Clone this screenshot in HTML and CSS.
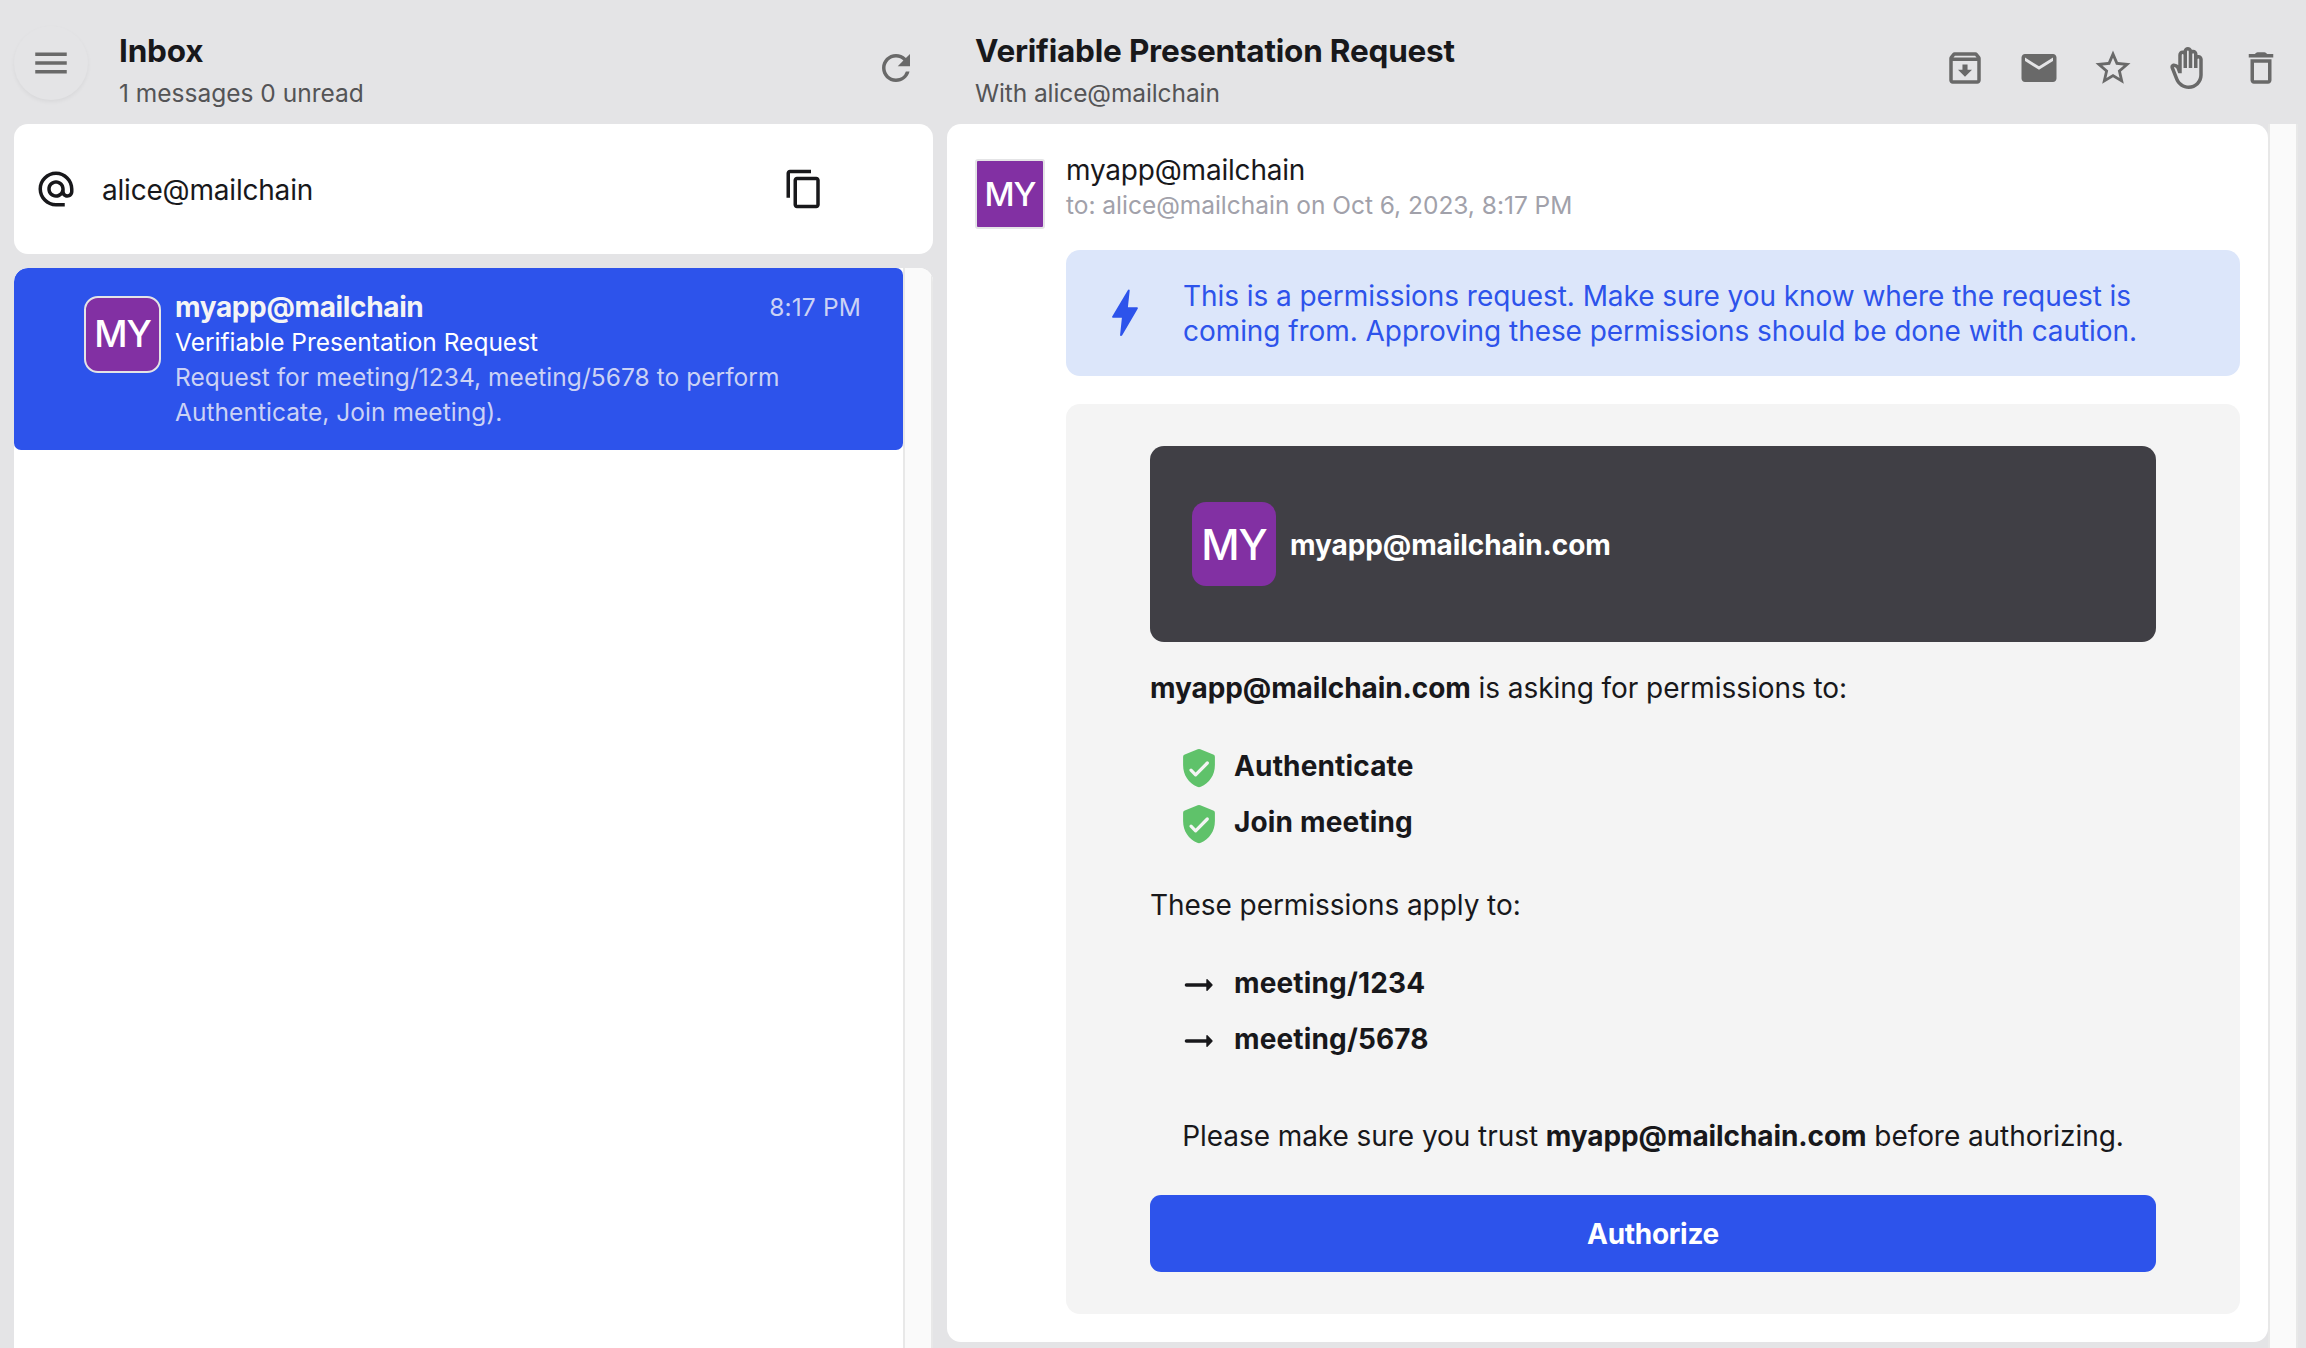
FILE: index.html
```html
<!DOCTYPE html>
<html lang="en">
<head>
<meta charset="utf-8">
<title>Inbox</title>
<link rel="stylesheet" href="styles.css">
</head>
<body>
<div class="app">
  <section class="inbox">
    <header class="bar">
      <button class="menu" aria-label="Menu"><svg class="icon" viewBox="0 0 24 24"><path d="M3 18h18v-2H3v2zm0-5h18v-2H3v2zm0-7v2h18V6H3z"/></svg></button>
      <div class="heading">
        <h1>Inbox</h1>
        <p>1 messages 0 unread</p>
      </div>
      <svg class="icon refresh" viewBox="0 0 24 24"><path d="M17.65 6.35A7.958 7.958 0 0 0 12 4c-4.42 0-7.99 3.58-7.99 8s3.57 8 7.99 8c3.73 0 6.84-2.55 7.73-6h-2.08A5.99 5.99 0 0 1 12 18c-3.31 0-6-2.69-6-6s2.69-6 6-6c1.66 0 3.14.69 4.22 1.78L13 11h7V4l-2.35 2.35z"/></svg>
    </header>
    <div class="address">
      <svg class="icon dark" viewBox="0 0 24 24"><path d="M12 2C6.48 2 2 6.48 2 12s4.48 10 10 10h5v-2h-5c-4.34 0-8-3.66-8-8s3.66-8 8-8 8 3.66 8 8v1.43c0 .79-.71 1.57-1.5 1.57s-1.5-.78-1.5-1.57V12c0-2.76-2.24-5-5-5s-5 2.24-5 5 2.24 5 5 5c1.38 0 2.64-.56 3.54-1.47.65.89 1.77 1.47 2.96 1.47 1.97 0 3.5-1.6 3.5-3.57V12c0-5.52-4.48-10-10-10zm0 13c-1.66 0-3-1.34-3-3s1.34-3 3-3 3 1.34 3 3-1.34 3-3 3z"/></svg>
      <span class="address-name">alice@mailchain</span>
      <svg class="icon dark" viewBox="0 0 24 24"><path d="M16 1H4c-1.1 0-2 .9-2 2v14h2V3h12V1zm3 4H8c-1.1 0-2 .9-2 2v14c0 1.1.9 2 2 2h11c1.1 0 2-.9 2-2V7c0-1.1-.9-2-2-2zm0 16H8V7h11v14z"/></svg>
    </div>
    <div class="list">
      <div class="list-body">
        <article class="item">
          <div class="avatar avatar-list">MY</div>
          <div class="item-text">
            <div class="item-top"><strong>myapp@mailchain</strong><time>8:17 PM</time></div>
            <p class="subject">Verifiable Presentation Request</p>
            <p class="preview">Request for meeting/1234, meeting/5678 to perform Authenticate, Join meeting).</p>
          </div>
        </article>
      </div>
      <div class="track"></div>
    </div>
  </section>

  <section class="reader">
    <header class="bar">
      <div class="heading">
        <h1>Verifiable Presentation Request</h1>
        <p>With alice@mailchain</p>
      </div>
      <nav class="actions">
        <svg class="icon" viewBox="0 0 24 24"><path d="M20.54 5.23l-1.39-1.68C18.88 3.21 18.47 3 18 3H6c-.47 0-.88.21-1.16.55L3.46 5.23C3.17 5.57 3 6.02 3 6.5V19c0 1.1.9 2 2 2h14c1.1 0 2-.9 2-2V6.5c0-.48-.17-.93-.46-1.27zM6.24 5h11.52l.83 1H5.42l.82-1zM5 19V8h14v11H5zm8.45-9h-2.9v3H8l4 4 4-4h-2.55z"/></svg>
        <svg class="icon" viewBox="0 0 24 24"><path d="M20 4H4c-1.1 0-1.99.9-1.99 2L2 18c0 1.1.9 2 2 2h16c1.1 0 2-.9 2-2V6c0-1.1-.9-2-2-2zm0 4l-8 5-8-5V6l8 5 8-5v2z"/></svg>
        <svg class="icon" viewBox="0 0 24 24"><path d="M22 9.24l-7.19-.62L12 2 9.19 8.63 2 9.24l5.46 4.73L5.82 21 12 17.27 18.18 21l-1.63-7.03L22 9.24zM12 15.4l-3.76 2.27 1-4.28-3.32-2.88 4.38-.38L12 6.1l1.71 4.04 4.38.38-3.32 2.88 1 4.28L12 15.4z"/></svg>
        <svg class="icon" viewBox="0 0 24 24"><path d="M21 7c0-1.38-1.12-2.5-2.5-2.5-.17 0-.34.02-.5.05V4c0-1.38-1.12-2.5-2.5-2.5-.23 0-.46.03-.67.09C14.46.66 13.56 0 12.5 0c-1.23 0-2.25.89-2.46 2.06C9.87 2.02 9.69 2 9.5 2 8.12 2 7 3.12 7 4.5v5.89c-.34-.31-.76-.54-1.22-.66l-.77-.21c-.83-.23-1.7.09-2.19.83-.38.57-.4 1.31-.15 1.95l2.56 6.43C6.49 21.91 9.57 24 13 24c4.42 0 8-3.58 8-8V7zm-2 9c0 3.31-2.69 6-6 6-2.61 0-4.95-1.59-5.91-4.01l-2.6-6.54.53.14c.46.12.83.46 1 .9L7 15h2V4.5c0-.28.22-.5.5-.5s.5.22.5.5V12h2V2.5c0-.28.22-.5.5-.5s.5.22.5.5V12h2V4c0-.28.22-.5.5-.5s.5.22.5.5v8h2V7c0-.28.22-.5.5-.5s.5.22.5.5v9z"/></svg>
        <svg class="icon" viewBox="0 0 24 24"><path d="M6 19c0 1.1.9 2 2 2h8c1.1 0 2-.9 2-2V7H6v12zM8 9h8v10H8V9zm7.5-5l-.6-.6c-.3-.3-.6-.4-1-.4h-3.800c-.4 0-.7.1-1 .4L8.500 4H5v2h14V4h-3.5z"/></svg>
      </nav>
    </header>
    <div class="reader-body">
      <article class="message">
        <div class="avatar avatar-message">MY</div>
        <div class="message-main">
          <p class="from">myapp@mailchain</p>
          <p class="to">to: alice@mailchain on Oct 6, 2023, 8:17 PM</p>
          <div class="notice">
            <svg class="bolt" viewBox="0 0 26 48"><path d="M15.8 1.2c.6-1.2 2-.9 1.9.4L15.9 18.300h8.900c.9 0 1.300.7.9 1.500L10.200 46.300c-.7 1.200-2.200.9-2.100-.4l1.800-17.100H1c-.8 0-1.200-.7-.8-1.400z"/></svg>
            <p>This is a permissions request. Make sure you know where the request is coming from. Approving these permissions should be done with caution.</p>
          </div>
          <div class="request">
            <div class="requester">
              <div class="avatar avatar-request">MY</div>
              <strong>myapp@mailchain.com</strong>
            </div>
            <p class="asking"><strong>myapp@mailchain.com</strong> is asking for permissions to:</p>
            <ul class="rows">
              <li><svg viewBox="0 0 42 42"><path class="shield" d="M19.700 2.300a3.500 3.500 0 0 1 2.600 0l12.900 5.200a2.400 2.400 0 0 1 1.700 2.300V18c0 10.200-5.600 18.100-14.100 21.700a4.200 4.200 0 0 1-3.600 0C10.700 36.100 5.100 28.200 5.100 18V9.800a2.400 2.400 0 0 1 1.700-2.300z"/><path class="tick" d="M13 23.100l4.600 4.700L29.300 16"/></svg><strong>Authenticate</strong></li>
              <li><svg viewBox="0 0 42 42"><path class="shield" d="M19.700 2.300a3.500 3.500 0 0 1 2.600 0l12.900 5.200a2.400 2.400 0 0 1 1.700 2.300V18c0 10.200-5.600 18.100-14.100 21.700a4.200 4.200 0 0 1-3.600 0C10.700 36.100 5.100 28.200 5.100 18V9.800a2.400 2.400 0 0 1 1.700-2.300z"/><path class="tick" d="M13 23.100l4.600 4.700L29.300 16"/></svg><strong>Join meeting</strong></li>
            </ul>
            <p class="apply">These permissions apply to:</p>
            <ul class="rows">
              <li><svg viewBox="0 0 42 42"><path class="shaft" d="M8.500 21H29"/><path class="head" d="M29 15.800l5 5.200-5 5.200z"/></svg><strong>meeting/1234</strong></li>
              <li><svg viewBox="0 0 42 42"><path class="shaft" d="M8.500 21H29"/><path class="head" d="M29 15.800l5 5.200-5 5.200z"/></svg><strong>meeting/5678</strong></li>
            </ul>
            <p class="trust">Please make sure you trust <strong>myapp@mailchain.com</strong> before authorizing.</p>
            <button class="authorize">Authorize</button>
          </div>
        </div>
      </article>
      <div class="track"></div>
    </div>
  </section>
</div>
</body>
</html>
```
FILE: styles.css
```css
* { box-sizing: border-box; margin: 0; padding: 0; }
body { background: #e4e4e6; color: #18181b; font: 28px/35px Inter, "Liberation Sans", sans-serif; letter-spacing: -.06px; overflow: hidden; }
ul { list-style: none; }
button { border: 0; font: inherit; }
strong { font-weight: 700; }

.app { display: flex; gap: 14px; height: 1348px; padding: 0 8px 0 14px; }
.icon { width: 42px; height: 42px; flex: none; fill: #696969; display: block; }
.icon.dark { fill: #18181b; }
.track { width: 30px; flex: none; background: #fafafa; border: solid #e8e8e8; border-width: 0 2px; }

.bar { display: flex; height: 124px; flex: none; }
.heading { flex: 1; padding-top: 30px; }
.heading h1 { font-size: 31.5px; line-height: 42px; font-weight: 700; letter-spacing: -.21px; }
.heading p { margin-top: 4px; font-size: 24.5px; letter-spacing: 0; color: #545456; }

.inbox { width: 919px; display: flex; flex-direction: column; }
.menu { width: 74px; height: 74px; margin: 26px 31px 0 0; padding: 16px; border-radius: 50%; background: #e4e4e6; box-shadow: 0 2px 4px rgba(0, 0, 0, .05); }
.refresh { margin: 47px 16px 0 0; }
.address { display: flex; align-items: center; height: 130px; flex: none; padding: 0 108px 0 21px; background: #fff; border-radius: 14px; }
.address-name { flex: 1; margin-left: 25px; padding-top: 2px; letter-spacing: -.2px; }
.list { flex: 1; display: flex; margin-top: 14px; background: #fff; border-radius: 14px 14px 0 0; overflow: hidden; }
.list-body { flex: 1; }
.item { display: flex; height: 182px; padding: 22px 42px 20px 70px; gap: 14px; background: #2d53eb; border-radius: 7px; border-top-left-radius: 14px; }
.item-text { flex: 1; color: #f4f4f5; font-size: 24.5px; letter-spacing: 0; }
.item-top { display: flex; justify-content: space-between; }
.item-top strong { font-size: 28px; letter-spacing: -.36px; }
.item-top time, .preview { color: #cbd2f5; }
.item-top time { letter-spacing: .15px; }
.preview { letter-spacing: .05px; }
.subject { color: #fff; }

.avatar { display: flex; align-items: center; justify-content: center; flex: none; background: #8230a3; color: #fff; font-weight: 500; letter-spacing: -1px; }
.avatar-list { width: 77px; height: 77px; margin-top: 6px; border: 2px solid #e4e4e6; border-radius: 14px; font-size: 36.5px; }
.avatar-message { width: 70px; height: 70px; margin-top: 7px; border: 2px solid #e4e4e6; border-radius: 3px; font-size: 33px; }
.avatar-request { width: 84px; height: 84px; border-radius: 14px; font-size: 42px; }

.reader { flex: 1; display: flex; flex-direction: column; }
.reader .heading { padding-left: 28px; }
.reader .heading p { letter-spacing: -.1px; }
.actions { display: flex; gap: 32px; padding: 47px 16px 0 0; }
.reader-body { flex: 1; display: flex; }
.message { flex: 1; display: flex; align-items: flex-start; gap: 21px; height: 1218px; padding: 28px; background: #fff; border-radius: 14px; }
.message-main { flex: 1; padding-top: 1px; }
.from { letter-spacing: -.2px; }
.to { font-size: 24.5px; letter-spacing: -.02px; color: #a1a1aa; }
.notice { display: flex; align-items: center; gap: 45px; margin: 27px 0 28px; padding: 29px 42px 27px 46px; background: #dce6fa; border-radius: 14px; color: #2d53eb; }
.bolt { width: 26px; height: 48px; margin-top: -2px; flex: none; fill: #2d53eb; }
.request { padding: 42px 84px; background: #f4f4f4; border-radius: 14px; }
.requester { display: flex; align-items: center; gap: 14px; height: 196px; padding: 0 42px; background: #403f45; color: #fff; border-radius: 14px; }
.requester strong { padding-top: 2px; }
.asking { margin-top: 29px; }
.asking strong, .requester strong, .trust strong { letter-spacing: -.09px; }
.rows { display: flex; flex-direction: column; gap: 21px; margin: 43px 0 48px; padding-left: 28px; }
.rows li { display: flex; gap: 14px; height: 35px; letter-spacing: .15px; }
.rows svg { width: 42px; height: 42px; margin-top: -2px; }
.shield { fill: #5fc26a; }
.tick { fill: none; stroke: #f4f4f4; stroke-width: 3.2; stroke-linecap: round; stroke-linejoin: round; }
.shaft { fill: none; stroke: #18181b; stroke-width: 3.6; stroke-linecap: round; }
.head { fill: #18181b; stroke: #18181b; stroke-width: 1.4; stroke-linejoin: round; }
.trust { margin-top: 62px; text-align: center; }
.authorize { display: block; width: 100%; height: 77px; margin-top: 41px; padding-top: 2px; border-radius: 11px; background: #2d53eb; color: #fff; font-weight: 700; letter-spacing: -.3px; }
```
